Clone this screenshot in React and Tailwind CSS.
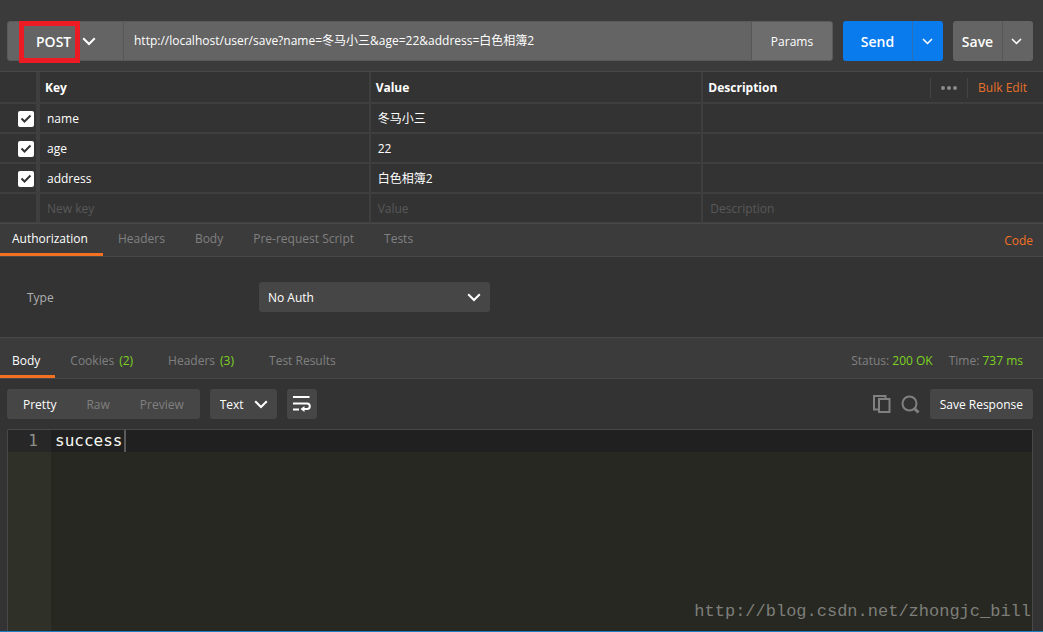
import React, { useState } from "react";

const initialRows = [
  { key: "name", value: "冬马小三" },
  { key: "age", value: "22" },
  { key: "address", value: "白色相簿2" },
];

const Chevron = ({ className = "" }) => (
  <svg
    viewBox="0 0 14 9"
    fill="none"
    stroke="currentColor"
    strokeWidth="2"
    className={`pointer-events-none ${className}`}
  >
    <path d="M1.200 1.200L7 7l5.800-5.800" />
  </svg>
);

const Dropdown = ({ label, options, className, selectClass, iconClass }) => (
  <div className={`relative ${className}`}>
    <select
      aria-label={label}
      className={`w-full h-full pt-[2px] appearance-none outline-none ${selectClass}`}
    >
      {options.map((option) => (
        <option key={option}>{option}</option>
      ))}
    </select>
    <Chevron className={`absolute w-[14px] h-[9px] ${iconClass}`} />
  </div>
);

const Tab = ({ children, count, active }) => (
  <button
    className={`relative h-full px-[15px] first:pl-3 ${
      active ? "text-white" : "text-[#808080]"
    }`}
  >
    {children}
    {count && (
      <span className="ml-[5px] mr-[5px] text-[#7ed321]">({count})</span>
    )}
    {active && (
      <span className="absolute left-0 bottom-0 w-full h-[3px] bg-[#f47023]" />
    )}
  </button>
);

const RequestBar = () => (
  <div className="flex gap-[10px] h-[71px] pt-[21px] pb-[10px] pl-[7px] pr-[10px] bg-[#3b3b3b]">
    <div className="flex flex-1 min-w-0 h-10 rounded-[3px] border border-[#5a5a5a] bg-[#646464]">
      <div className="relative w-[116px] border-r border-[#575757]">
        <Dropdown
          label="Method"
          options={["POST", "GET", "PUT", "DELETE"]}
          className="h-full"
          selectClass="pl-7 text-sm font-semibold"
          iconClass="left-[74px] top-[15px]"
        />
        <span className="absolute left-[11px] -top-px w-[61px] h-[42px] border-5 border-[#ed1c24] pointer-events-none" />
      </div>
      <input
        type="text"
        aria-label="Request URL"
        defaultValue="http://localhost/user/save?name=冬马小三&age=22&address=白色相簿2"
        className="flex-1 min-w-0 px-[10px] outline-none"
      />
      <button className="w-[81px] pt-[2px] rounded-r-[2px] border-l border-[#575757] bg-[#6d6d6d]">
        Params
      </button>
    </div>

    <div className="flex h-10 rounded-[3px] bg-[#097bed] text-sm font-semibold">
      <button className="w-[69px] pt-[2px]">Send</button>
      <button
        aria-label="Send options"
        className="flex justify-center items-center w-[31px] pr-[2px] border-l border-[#2c6fb5]"
      >
        <Chevron className="w-[11px] h-[7px]" />
      </button>
    </div>

    <div className="flex h-10 rounded-[3px] bg-[#646464] text-sm font-semibold">
      <button className="w-[49px] pt-[2px]">Save</button>
      <button
        aria-label="Save options"
        className="flex justify-center items-center w-[31px] pr-1 border-l border-[#575757]"
      >
        <Chevron className="w-[11px] h-[7px]" />
      </button>
    </div>
  </div>
);

const Cell = ({ label, value, placeholder }) => (
  <input
    type="text"
    aria-label={label}
    defaultValue={value}
    placeholder={placeholder}
    className="block w-full h-7 px-[7px] outline-none placeholder:text-[#585858]"
  />
);

const ParamsTable = () => {
  const [checked, setChecked] = useState([true, true, true]);

  const toggle = (index) =>
    setChecked(checked.map((on, i) => (i === index ? !on : on)));

  return (
    <table className="w-full table-fixed border-separate border-spacing-0 border-t border-[#484848]">
      <thead>
        <tr className="h-8 text-left [&>th]:border-b-2 [&>th]:border-[#3f3f3f] [&>th]:p-0 [&>th]:pt-[2px] [&>th]:font-bold">
          <th aria-label="Enabled" className="w-10 border-r-4"></th>
          <th className="w-[31.7%] border-r-2">
            <span className="pl-[5px]">Key</span>
          </th>
          <th className="w-[31.9%] border-r-2">
            <span className="pl-[5px]">Value</span>
          </th>
          <th>
            <div className="flex items-center pl-[5px] pr-4">
              <span className="flex-1">Description</span>
              <button
                aria-label="More columns"
                className="flex justify-center items-center gap-[2px] w-[38px] h-5 border-x border-[#444]"
              >
                <i className="w-1 h-1 rounded-full bg-[#8a8a8a]" />
                <i className="w-1 h-1 rounded-full bg-[#8a8a8a]" />
                <i className="w-1 h-1 rounded-full bg-[#8a8a8a]" />
              </button>
              <button className="pl-[10px] font-normal text-[#e8702a]">
                Bulk Edit
              </button>
            </div>
          </th>
        </tr>
      </thead>
      <tbody className="[&_td]:p-0 [&_td]:border-[#3f3f3f]">
        {initialRows.map((row, index) => (
          <tr key={row.key} className="[&>td]:border-b-2">
            <td className="border-r-4">
              <label className="grid w-4 h-4 mt-[2px] ml-[18px]">
                <input
                  type="checkbox"
                  aria-label={`Use ${row.key}`}
                  checked={checked[index]}
                  onChange={() => toggle(index)}
                  className="col-start-1 row-start-1 w-4 h-4 appearance-none rounded-[2px] bg-white"
                />
                {checked[index] && (
                  <svg
                    viewBox="0 0 16 16"
                    fill="none"
                    stroke="#333"
                    strokeWidth="2"
                    className="col-start-1 row-start-1 w-4 h-4 pointer-events-none"
                  >
                    <path d="M3.500 7.500l3 3 6-6" />
                  </svg>
                )}
              </label>
            </td>
            <td className="border-r-2">
              <Cell label="Key" value={row.key} />
            </td>
            <td className="border-r-2">
              <Cell label="Value" value={row.value} />
            </td>
            <td>
              <Cell label="Description" />
            </td>
          </tr>
        ))}
        <tr className="[&>td]:border-b">
          <td className="border-r-4"></td>
          <td className="border-r-2">
            <Cell label="New key" placeholder="New key" />
          </td>
          <td className="border-r-2">
            <Cell label="New value" placeholder="Value" />
          </td>
          <td>
            <Cell label="New description" placeholder="Description" />
          </td>
        </tr>
      </tbody>
    </table>
  );
};

const RequestTabs = () => (
  <div className="flex justify-between h-[34px] pr-[10px] border-y border-[#484848] bg-[#3b3b3b]">
    <nav className="flex [&>button]:pb-[2px]">
      <Tab active>Authorization</Tab>
      <Tab>Headers</Tab>
      <Tab>Body</Tab>
      <Tab>Pre-request Script</Tab>
      <Tab>Tests</Tab>
    </nav>
    <button className="pt-[2px] text-[#f47023]">Code</button>
  </div>
);

const ResponseTabs = () => (
  <div className="flex justify-between items-center h-[42px] pr-5 border-y border-[#484848] bg-[#3b3b3b]">
    <nav className="flex h-full [&>button]:pt-[6px]">
      <Tab active>Body</Tab>
      <Tab count={2}>Cookies</Tab>
      <Tab count={3}>Headers</Tab>
      <Tab>Test Results</Tab>
    </nav>
    <div className="flex gap-4 pt-[6px] text-[#808080]">
      <span>
        Status: <span className="text-[#7ed321]">200 OK</span>
      </span>
      <span>
        Time: <span className="text-[#7ed321]">737 ms</span>
      </span>
    </div>
  </div>
);

const ResponseToolbar = () => (
  <div className="flex items-center gap-[10px] h-[50px] pl-[7px] pr-[10px]">
    <div className="flex h-[30px] px-[1px] rounded-[3px] bg-[#464646] text-[#808080]">
      <button className="px-[15px] pt-[2px] text-white">Pretty</button>
      <button className="px-[15px] pt-[2px]">Raw</button>
      <button className="px-[15px] pt-[2px]">Preview</button>
    </div>
    <Dropdown
      label="Format"
      options={["Text", "JSON", "XML", "HTML"]}
      className="w-[67px] h-[30px]"
      selectClass="pl-[10px] rounded-[3px] bg-[#464646]"
      iconClass="right-[9px] top-[11px]"
    />
    <button
      aria-label="Wrap lines"
      className="flex justify-center items-center w-[30px] h-[30px] rounded-[3px] bg-[#464646]"
    >
      <svg
        viewBox="0 0 18 16"
        fill="none"
        stroke="currentColor"
        strokeWidth="2"
        className="w-[18px] h-4"
      >
        <path d="M0 1h16.500M0 7.500h14a2.800 2.800 0 0 1 0 5.600H11M0 13.500h6" />
        <path d="M11.500 10v6l-4-3z" fill="currentColor" stroke="none" />
      </svg>
    </button>

    <div className="flex items-center gap-[10px] ml-auto text-[#808080]">
      <button aria-label="Copy">
        <svg
          viewBox="0 0 18 18"
          fill="none"
          stroke="currentColor"
          strokeWidth="2"
          className="w-[18px] h-[18px]"
        >
          <path d="M12.500 3V1H1v13.500h4" />
          <path d="M6 4h10.500v13H6z" />
        </svg>
      </button>
      <button aria-label="Search">
        <svg
          viewBox="0 0 19 19"
          fill="none"
          stroke="currentColor"
          strokeWidth="2"
          className="w-[19px] h-[19px]"
        >
          <circle cx="8.500" cy="8.500" r="7" />
          <path d="M13 13l4.500 4.500" strokeWidth="3" />
        </svg>
      </button>
      <button className="h-[30px] px-[10px] pt-[2px] rounded-[3px] bg-[#464646] text-white">
        Save Response
      </button>
    </div>
  </div>
);

const ResponseBody = () => (
  <div className="relative flex flex-1 ml-[7px] mr-[10px] border border-b-0 border-[#484848] rounded-t-[2px] bg-[#272822] font-['DejaVu_Sans_Mono',monospace] text-base leading-[22px]">
    <div className="w-[43px] bg-[#2f3129] text-right text-[#8f908a]">
      <div className="h-[22px] pr-[13px] bg-[#272727]">1</div>
    </div>
    <div className="flex-1">
      <div className="flex h-[22px] pl-1 bg-[#202020] text-[#f8f8f2]">
        <code className="pr-[2px] border-r-2 border-[#5a5a5a] font-['DejaVu_Sans_Mono',monospace]">
          success
        </code>
      </div>
    </div>
    <span className="absolute right-px bottom-2 font-['Liberation_Mono',monospace] text-[17px] text-[#7d7e79]">
      http://blog.csdn.net/zhongjc_bill
    </span>
  </div>
);

const App = () => {
  return (
    <div className="flex flex-col min-h-screen border-b border-[#1c7fc4] bg-[#333] text-xs text-white font-['Open_Sans','Noto_Sans_CJK_SC',sans-serif]">
      <RequestBar />
      <ParamsTable />
      <RequestTabs />

      <div className="flex items-center h-20 pl-[27px] text-[#b0b0b0]">
        <span className="w-[232px] pt-[2px]">Type</span>
        <Dropdown
          label="Type"
          options={["No Auth", "Basic Auth", "OAuth 2.0"]}
          className="w-[231px] h-[30px] text-white"
          selectClass="pl-[9px] rounded-[3px] bg-[#464646]"
          iconClass="right-[9px] top-[11px]"
        />
      </div>

      <ResponseTabs />
      <ResponseToolbar />
      <ResponseBody />
    </div>
  );
};

export default App;
